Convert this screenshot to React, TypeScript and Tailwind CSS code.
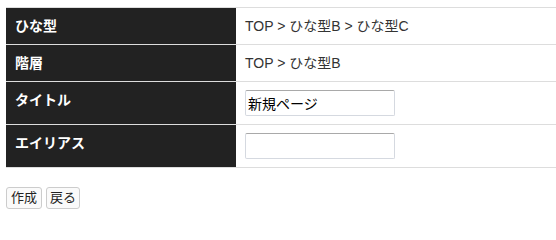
import React from "react";

const rows: { label: string; kind: "text" | "input"; value: string }[] = [
  { label: "ひな型", kind: "text", value: "TOP > ひな型B > ひな型C" },
  { label: "階層", kind: "text", value: "TOP > ひな型B" },
  { label: "タイトル", kind: "input", value: "新規ページ" },
  { label: "エイリアス", kind: "input", value: "" },
];

export default function App() {
  return (
    <div className="bg-white min-h-[217px] pt-[7px] pl-[6px] font-['Liberation_Sans','Noto_Sans_CJK_JP',sans-serif]">
      <div className="w-[550px] border-t border-[#dddddd]">
        {rows.map((r) => (
          <div key={r.label} className="flex border-b border-[#dddddd]">
            <div className="w-[230px] shrink-0 bg-[#222222] text-white font-bold text-[14px] leading-[20px] px-[9px] py-[8px]">
              {r.label}
            </div>
            <div className="flex-1 px-[9px] py-[8px] text-[14px] leading-[20px] text-[#333333]">
              {r.kind === "text" ? (
                <span>{r.value}</span>
              ) : (
                <input
                  type="text"
                  defaultValue={r.value}
                  className="block w-[150px] h-[26px] border border-[#d5d9e0] border-t-[#a9a9a9] rounded-[2px] px-[2px] text-[14px] text-black bg-white outline-none font-['Liberation_Sans','Noto_Sans_CJK_JP',sans-serif]"
                />
              )}
            </div>
          </div>
        ))}
      </div>
      <div className="flex gap-[4px] mt-[19px]">
        <button className="h-[22px] px-[4px] border border-[#cccccc] rounded-[3px] bg-[#fafafa] text-[13px] leading-[20px] text-[#222222]">
          作成
        </button>
        <button className="h-[22px] px-[3px] border border-[#cccccc] rounded-[3px] bg-[#fafafa] text-[13px] leading-[20px] text-[#222222]">
          戻る
        </button>
      </div>
    </div>
  );
}
